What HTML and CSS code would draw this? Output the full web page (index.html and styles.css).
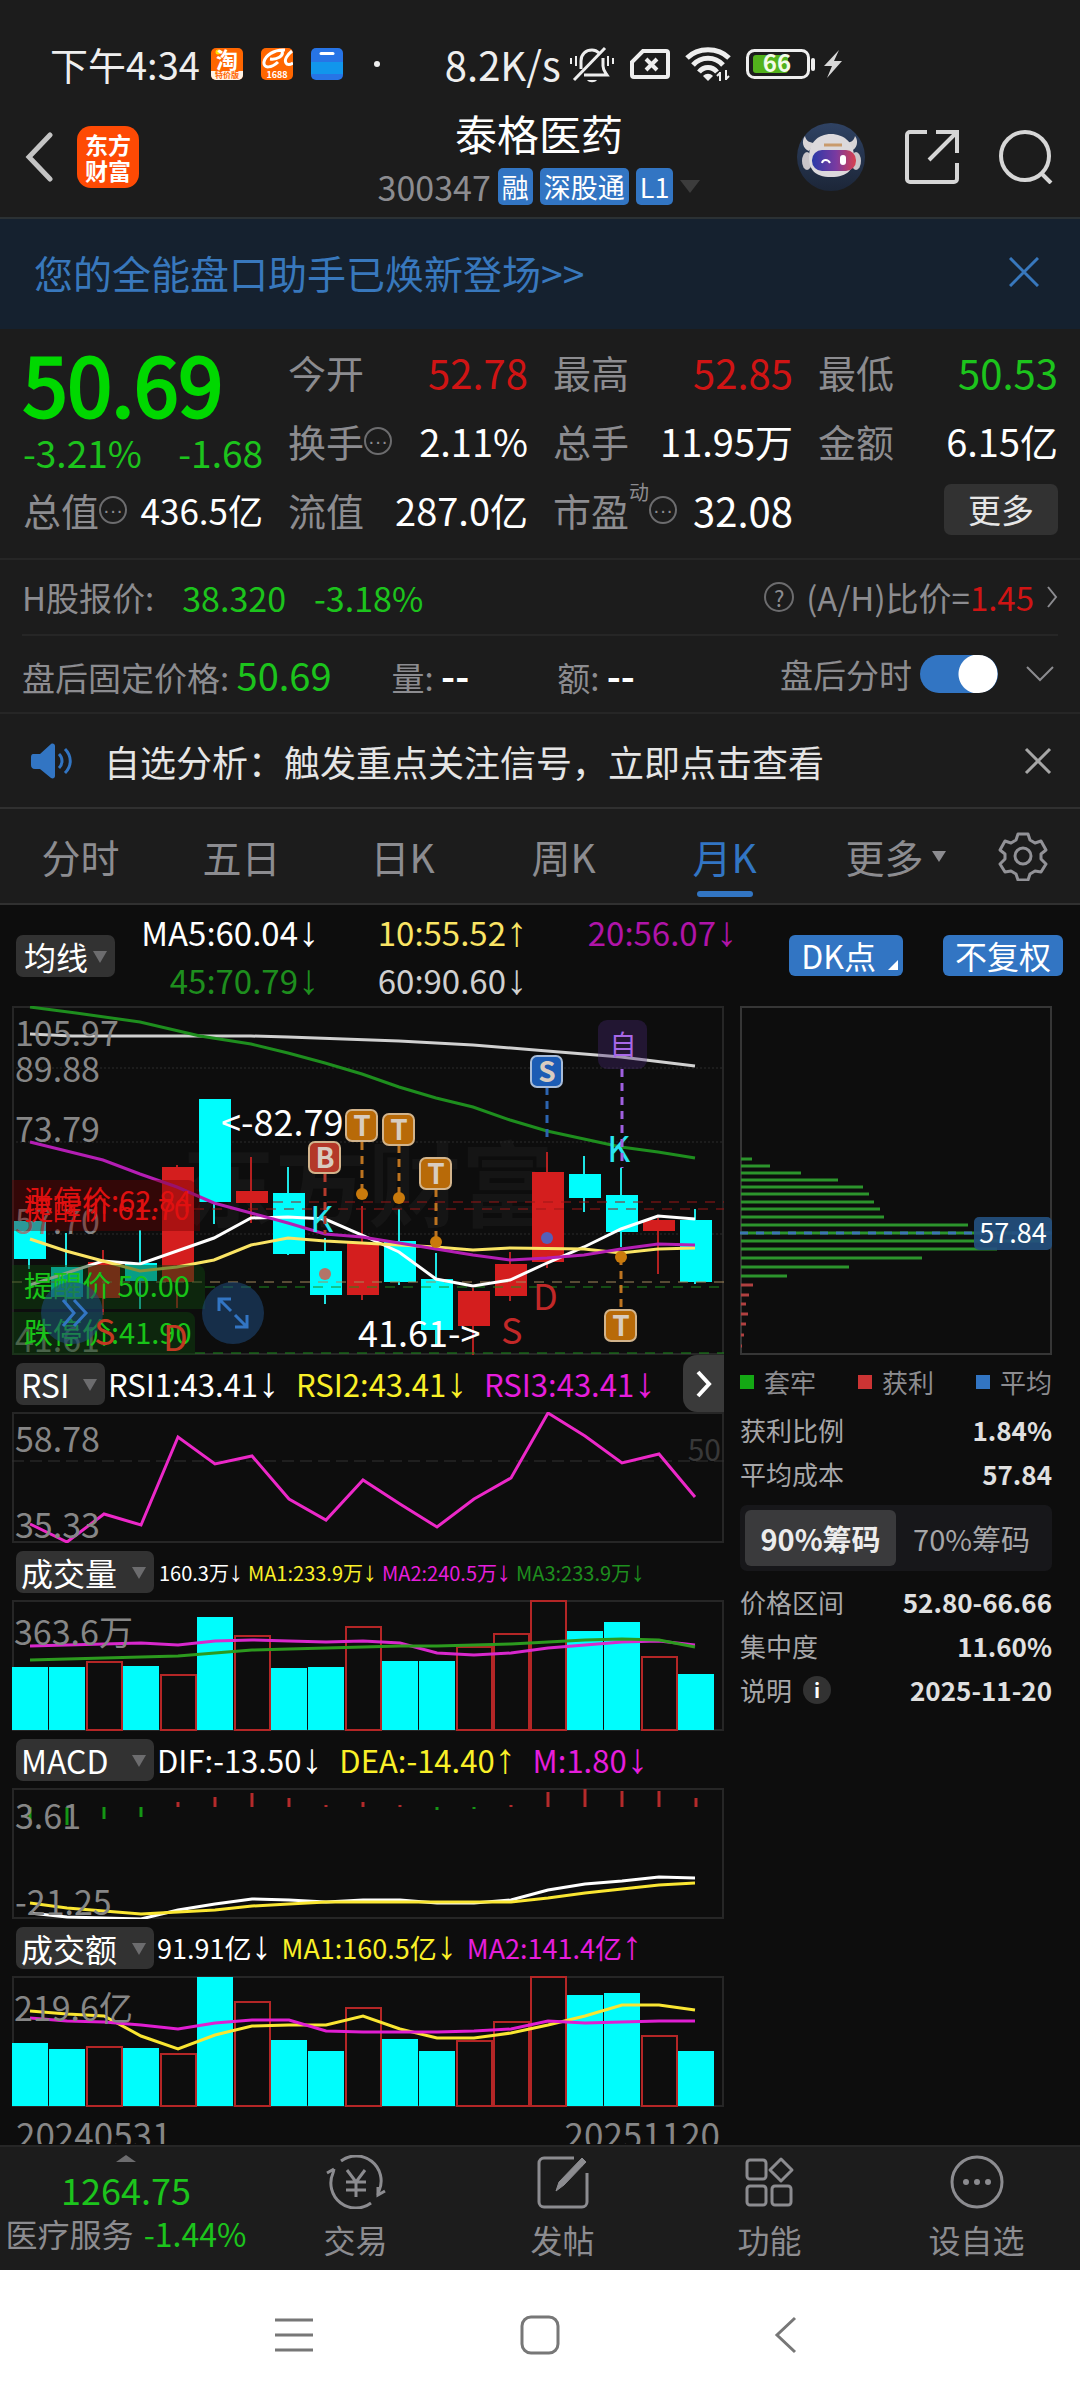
FILE: index.html
```html
<!DOCTYPE html>
<html lang="zh-CN">
<head>
    <meta charset="UTF-8">
    <meta name="viewport" content="width=device-width, initial-scale=1.0">
    <title>泰格医药 300347</title>
    <link rel="stylesheet" href="styles.css">
</head>
<body>
    <!-- Phone status bar -->
    <div class="status">
        <span class="clock">下午4:34</span>
        <div class="notices">
            <svg width="32" height="32" viewBox="0 0 32 32">
                <rect width="32" height="32" rx="5" fill="#f60"/>
                <path d="M0 23h32v4a5 5 0 0 1-5 5H5a5 5 0 0 1-5-5z" fill="#fff3e6"/>
                <circle cx="7" cy="4" r="2.5" fill="#ffe100"/>
                <text x="16" y="20" font-size="22" font-weight="700" fill="#fff" text-anchor="middle">淘</text>
                <text x="16" y="30" font-size="8" font-weight="700" fill="#f60" text-anchor="middle">特价版</text>
            </svg>
            <svg width="32" height="32" viewBox="0 0 32 32">
                <rect width="32" height="32" rx="5" fill="#f60"/>
                <path d="M24 2C13 1 4 8 3 14c-1 7 8 6 14 0M9 11c7 1 14-3 12-8M31 3c-5 4-8 9-6 12 1 2 4 2 7 0" fill="none" stroke="#fff" stroke-width="3"/>
                <text x="16" y="30" font-size="9" font-weight="700" fill="#fff" text-anchor="middle">1688</text>
            </svg>
            <svg width="32" height="32" viewBox="0 0 32 32">
                <rect width="32" height="32" rx="5" fill="#2774e6"/>
                <path d="M0 14h32v12H0z" fill="#1196ec"/>
                <path d="M10 5.500h12" stroke="#fff" stroke-width="3" stroke-linecap="round"/>
            </svg>
            <span class="dot"></span>
        </div>
        <span class="speed">8.2K/s</span>
        <div class="signals">
            <svg width="46" height="40" viewBox="0 0 46 40" fill="none" stroke="#eee" stroke-width="3">
                <path d="M12 25V17c0-7 5-11 11-11 3 0 5 1 7 3M34 14v8c0 4 2 6 4 9H15"/>
                <path d="M5 36 36 4"/>
                <path d="M18 36c2 3 8 3 10 0z" fill="#eee" stroke="none"/>
                <path d="M7 12v10M2 14v6M39 12v10M44 14v6" stroke-width="2"/>
            </svg>
            <svg width="40" height="32" viewBox="0 0 40 32" fill="none" stroke="#eee" stroke-width="4">
                <path d="M13 3h23a2 2 0 0 1 2 2v22a2 2 0 0 1-2 2H4a2 2 0 0 1-2-2V14z"/>
                <path d="m16 11 11 11M27 11 16 22"/>
            </svg>
            <svg width="46" height="36" viewBox="0 0 46 36" fill="none" stroke="#eee" stroke-width="5">
                <path d="M2 12C13 1 33 1 44 12M8 19c8-9 22-9 30 0M14 26c5-6 13-6 18 0"/>
                <path d="m18 30c3-3 7-3 10 0l-5 5z" fill="#eee" stroke="none"/>
                <path d="M35 26v9m0-8-3 3M41 24v10m0-1 3-3" stroke-width="2"/>
            </svg>
            <svg width="70" height="32" viewBox="0 0 70 32">
                <rect x="1.500" y="2.500" width="61" height="27" rx="7" fill="none" stroke="#eee" stroke-width="3"/>
                <rect x="7" y="7" width="35" height="18" rx="3" fill="#52b21c"/>
                <path d="M67 12v9" stroke="#eee" stroke-width="4" stroke-linecap="round"/>
                <text x="31" y="24" font-size="24" font-weight="700" fill="#f2fbe9" text-anchor="middle">66</text>
            </svg>
            <svg class="bolt" width="20" height="30" viewBox="0 0 20 30"><path d="M16 1 1 17h8L4 29 19 12h-8z" fill="#d8d8d8"/></svg>
        </div>
    </div>

    <!-- Title bar -->
    <header class="topbar">
        <div class="top-left">
            <button class="icon-btn" aria-label="返回">
                <svg width="28" height="50" viewBox="0 0 28 50" fill="none" stroke="#c4c4c4" stroke-width="5" stroke-linecap="round"><path d="M25 3 4 25l21 22"/></svg>
            </button>
            <a class="logo" href="#">东方<br>财富</a>
        </div>
        <div class="stock">
            <h1>泰格医药</h1>
            <div class="stock-sub">
                <span class="code">300347</span>
                <span class="tag">融</span>
                <span class="tag">深股通</span>
                <span class="tag">L1</span>
                <button class="icon-btn" aria-label="切换"><svg width="20" height="14" viewBox="0 0 20 14"><path d="M0 0h20L10 13z" fill="#3c3c3c"/></svg></button>
            </div>
        </div>
        <div class="top-right">
            <button class="icon-btn" aria-label="智能助手">
                <svg width="68" height="68" viewBox="0 0 68 68">
                    <defs>
                        <linearGradient id="visor"><stop offset="0" stop-color="#2b3aa8"/><stop offset=".55" stop-color="#7a3aa0"/><stop offset="1" stop-color="#d8404e"/></linearGradient>
                        <linearGradient id="sky" x2="0" y2="1"><stop offset="0" stop-color="#2f4263"/><stop offset="1" stop-color="#1c2638"/></linearGradient>
                    </defs>
                    <circle cx="34" cy="34" r="34" fill="url(#sky)"/>
                    <path d="M8 13c-4 5-2 13 4 15l6-8c-5 0-9-2-10-7zM58 13c4 5 2 13-4 15l-6-8c5 0 9-2 10-7z" fill="#d8d4d6"/>
                    <ellipse cx="10" cy="38" rx="5" ry="9" fill="#c9c5c9"/>
                    <ellipse cx="59" cy="38" rx="5" ry="9" fill="#c9c5c9"/>
                    <path d="M12 34c0-14 9-23 22-23s23 9 23 23c0 12-6 20-23 20S12 46 12 34z" fill="#dcd9dc"/>
                    <rect x="15" y="27" width="44" height="21" rx="10" fill="url(#visor)"/>
                    <path d="M27 22h18" stroke="#c99a6c" stroke-width="3"/>
                    <path d="M25 40c1-4 6-4 8 0" fill="none" stroke="#fff" stroke-width="2"/>
                    <rect x="43" y="32" width="6" height="10" rx="3" fill="#fff"/>
                </svg>
            </button>
            <button class="icon-btn" aria-label="分享">
                <svg width="54" height="54" viewBox="0 0 54 54" fill="none" stroke="#d6d6d6" stroke-width="4"><path d="M22 2H5a3 3 0 0 0-3 3v44a3 3 0 0 0 3 3h44a3 3 0 0 0 3-3V33M31 2h21v21M52 2 24 30"/></svg>
            </button>
            <button class="icon-btn" aria-label="搜索">
                <svg width="54" height="54" viewBox="0 0 54 54" fill="none" stroke="#d6d6d6" stroke-width="4"><circle cx="26" cy="26" r="24"/><path d="m42 43 10 10"/></svg>
            </button>
        </div>
    </header>

    <div class="promo">
        <a href="#">您的全能盘口助手已焕新登场&gt;&gt;</a>
        <button class="icon-btn" aria-label="关闭">
            <svg width="30" height="30" viewBox="0 0 30 30" stroke="#3878bd" stroke-width="3"><path d="m1 1 28 28M29 1 1 29"/></svg>
        </button>
    </div>

    <!-- Quote numbers -->
    <section class="quote">
        <div class="price">
            <div class="last">50.69</div>
            <div class="change"><span>-3.21%</span><span>-1.68</span></div>
        </div>
        <div class="cell"><span>今开</span><b class="red">52.78</b></div>
        <div class="cell"><span>最高</span><b class="red">52.85</b></div>
        <div class="cell"><span>最低</span><b class="green">50.53</b></div>
        <div class="cell cjk"><span>换手<em class="more">···</em></span><b>2.11%</b></div>
        <div class="cell cjk"><span>总手</span><b>11.95万</b></div>
        <div class="cell cjk"><span>金额</span><b>6.15亿</b></div>
        <div class="cell small"><span>总值<em class="more">···</em></span><b>436.5亿</b></div>
        <div class="cell cjk"><span>流值</span><b>287.0亿</b></div>
        <div class="cell"><span>市盈<sup>动</sup><em class="more">···</em></span><b>32.08</b></div>
        <div class="cell end"><button class="more-btn">更多</button></div>
    </section>

    <div class="line-row h-share">
        <span>H股报价:</span>
        <b class="green">38.320</b>
        <b class="green">-3.18%</b>
        <a class="ratio" href="#">
            <em class="help">?</em>
            <span>(A/H)比价=<b class="red">1.45</b></span>
            <svg width="12" height="24" viewBox="0 0 12 24" fill="none" stroke="#8c8c90" stroke-width="2"><path d="m2 2 8 10-8 10"/></svg>
        </a>
    </div>
    <div class="line-row after">
        <span>盘后固定价格: <b class="green">50.69</b></span>
        <span class="vol">量: <b>--</b></span>
        <span class="amt">额: <b>--</b></span>
        <label class="switch">盘后分时<input type="checkbox" role="switch" checked></label>
        <button class="icon-btn" aria-label="展开">
            <svg width="28" height="16" viewBox="0 0 28 16" fill="none" stroke="#8c8c90" stroke-width="2"><path d="m1 1 13 13L27 1"/></svg>
        </button>
    </div>

    <div class="alert">
        <svg width="42" height="36" viewBox="0 0 42 36">
            <path d="M2 11h7L20 1c2-1 4 0 4 2v30c0 2-2 3-4 2L9 26H4c-3 0-4-2-4-4v-8c0-2 1-3 2-3z" fill="#3275c3"/>
            <path d="M28 11c4 4 4 10 0 14M34 6c7 7 7 17 0 24" fill="none" stroke="#3275c3" stroke-width="3"/>
        </svg>
        <a href="#">自选分析：触发重点关注信号，立即点击查看</a>
        <button class="icon-btn" aria-label="关闭">
            <svg width="28" height="28" viewBox="0 0 28 28" stroke="#a6a6a6" stroke-width="3"><path d="m2 2 24 24M26 2 2 26"/></svg>
        </button>
    </div>

    <nav class="tabs">
        <button>分时</button>
        <button>五日</button>
        <button>日K</button>
        <button>周K</button>
        <button class="active">月K</button>
        <button class="others">更多<i class="tri"></i></button>
        <button aria-label="设置">
            <svg width="50" height="50" viewBox="0 0 50 50" fill="none" stroke="#929297" stroke-width="3" stroke-linejoin="round">
                <path d="M20 3h10l2 6 5 3 6-2 5 9-5 4v5l5 5-5 8-6-1-5 3-2 6H20l-2-6-5-3-6 1-5-8 5-5v-5l-5-4 5-9 6 2 5-3z"/>
                <circle cx="25" cy="25" r="8"/>
            </svg>
        </button>
    </nav>

    <main class="charts">
        <div class="ma-bar">
            <span class="pick"><select aria-label="主图指标"><option>均线</option></select></span>
            <div class="ma-values">
                <span>MA5:60.04<i>↓</i></span>
                <span class="yellow">10:55.52<i>↑</i></span>
                <span class="purple">20:56.07<i>↓</i></span>
                <span class="dkgreen">45:70.79<i>↓</i></span>
                <span class="silver">60:90.60<i>↓</i></span>
            </div>
            <button class="blue-btn dk">DK点</button>
            <button class="blue-btn">不复权</button>
        </div>

        <div class="columns">
            <div class="left">
                <!-- Monthly candles -->
                <svg class="plot" viewBox="0 0 712 349">
                    <text class="mark-text" x="170" y="214">东方财富</text>
                    <path class="dots" d="M0 62h712M0 136h712M0 228h712"/>
                    <rect class="frame" x="1" y="1" width="710" height="347"/>
                    <g class="cyan">
                        <path d="M17 215v48M54 227v69M128 224v79M202 93v125M276 161v88M313 232v66M387 203v76M424 247v92M572 150v56M609 162v79M683 203v75"/>
                        <rect x="2" y="215" width="32" height="38"/>
                        <rect x="39" y="261" width="32" height="30"/>
                        <rect x="113" y="257" width="32" height="18"/>
                        <rect x="187" y="93" width="32" height="103"/>
                        <rect x="261" y="187" width="32" height="61"/>
                        <rect x="298" y="245" width="32" height="44"/>
                        <rect x="372" y="235" width="32" height="41"/>
                        <rect x="409" y="273" width="32" height="51"/>
                        <rect x="557" y="168" width="32" height="24"/>
                        <rect x="594" y="189" width="32" height="37"/>
                        <rect x="668" y="214" width="32" height="62"/>
                    </g>
                    <g class="rise">
                        <path d="M91 244v65M165 159v143M239 151v66M350 200v94M461 282v67M498 246v49M535 146v116M646 212v56"/>
                        <rect x="76" y="256" width="32" height="36"/>
                        <rect x="150" y="161" width="32" height="115"/>
                        <rect x="224" y="185" width="32" height="12"/>
                        <rect x="335" y="237" width="32" height="52"/>
                        <rect x="446" y="285" width="32" height="35"/>
                        <rect x="483" y="258" width="32" height="32"/>
                        <rect x="520" y="166" width="32" height="90"/>
                        <rect x="631" y="214" width="32" height="11"/>
                    </g>
                    <g class="levels">
                        <path d="M261 196h451M182 203h530" stroke="#9c1616"/>
                        <path d="M0 276h712" stroke="#a58a5c"/>
                        <path d="M193 281h519M183 347h529" stroke="#1c8c1c"/>
                    </g>
                    <g class="curve">
                        <polyline stroke="#d0d0d0" points="18,28 60,30 128,30 239,30 276,31 387,35 461,39 535,45 609,51 683,60"/>
                        <polyline stroke="#1e8e1e" points="18,1 64,7 128,16 188,30 239,38 276,47 313,57 350,68 387,81 424,92 461,101 498,114 535,125 572,133 609,141 646,146 683,152"/>
                        <polyline stroke="#fff" points="18,279 91,255 128,258 202,232 239,212 276,211 313,213 350,229 387,246 424,273 461,280 498,274 535,257 572,241 609,223 646,210 683,213"/>
                        <polyline stroke="#fae464" points="18,233 54,245 91,255 128,265 165,261 202,254 239,239 276,232 313,235 350,237 387,239 424,241 461,244 498,242 572,243 609,247 646,243 683,242"/>
                        <polyline stroke="#b41eb4" points="18,136 91,154 128,168 165,181 202,197 239,207 276,217 313,228 350,231 387,237 424,243 461,249 498,254 535,252 572,249 609,243 646,238 683,239"/>
                    </g>
                    <g class="axis">
                        <text x="3" y="40">105.97</text>
                        <text x="3" y="76">89.88</text>
                        <text x="3" y="136">73.79</text>
                        <text x="3" y="228">57.70</text>
                        <text x="3" y="346">41.61</text>
                    </g>

                    <!-- Price limits and reminders -->
                    <g class="limit">
                        <path d="M0 174h176a8 8 0 0 1 8 8v36H0zM0 181h180a8 8 0 0 1 8 8v36H0z" fill="#6e0000" fill-opacity=".4"/>
                        <path d="M0 259h185a8 8 0 0 1 8 8v36H0zM0 306h175a8 8 0 0 1 8 8v35H0z" fill="#0d400d" fill-opacity=".5"/>
                        <text x="12" y="206" fill="#e01010">涨停价:62.84</text>
                        <text x="12" y="214" fill="#e01010">提醒价 61.70</text>
                        <text x="12" y="291" fill="#18c418">提醒价 50.00</text>
                        <text x="12" y="338" fill="#18c418">跌停价:41.90</text>
                    </g>
                    <g fill="#1f4a7c" fill-opacity=".55"><circle cx="60" cy="307" r="31"/><circle cx="221" cy="307" r="31"/></g>
                    <g fill="none" stroke="#3275c3" stroke-width="3">
                        <path d="m51 294 11 13-11 13M62 294l12 13-12 13"/>
                        <path d="M219 305l-12-12m0 12v-12h12M223 309l12 12m0-12v12h-12"/>
                    </g>
                    <g class="note">
                        <text x="209" y="130" fill="#fff">&lt;-82.79</text>
                        <text x="346" y="341" fill="#fff">41.61-&gt;</text>
                        <text x="82" y="339" fill="#c23a22">S</text>
                        <text x="151" y="345" fill="#c23a22">D</text>
                        <text x="489" y="338" fill="#c22828">S</text>
                        <text x="521" y="304" fill="#c22828">D</text>
                        <text x="298" y="226" fill="#28e6f0">K</text>
                        <text x="595" y="156" fill="#28e6f0">K</text>
                    </g>

                    <!-- Trade markers -->
                    <g class="stem">
                        <path d="M313 168v60" stroke="#b43a2c"/>
                        <path d="M350 136v52M387 139v53M424 183v53M609 251v52" stroke="#bd7420"/>
                        <path d="M535 81v54" stroke="#2c64b0"/>
                        <path d="M610 63v99" stroke="#a060e0"/>
                    </g>
                    <g fill="#c97a0c">
                        <circle cx="350" cy="188" r="6"/>
                        <circle cx="387" cy="192" r="6"/>
                        <circle cx="424" cy="236" r="6"/>
                        <circle cx="609" cy="251" r="6"/>
                        <circle cx="313" cy="268" r="6" fill="#b47468"/>
                        <circle cx="535" cy="232" r="6" fill="#5560b8"/>
                    </g>
                    <g class="badge" stroke="#d2b48c">
                        <rect x="297" y="136" width="31" height="31" rx="6" fill="#b43828"/>
                        <rect x="334" y="104" width="31" height="31" rx="6" fill="#b86a08"/>
                        <rect x="371" y="108" width="31" height="31" rx="6" fill="#b86a08"/>
                        <rect x="408" y="152" width="31" height="31" rx="6" fill="#b86a08"/>
                        <rect x="593" y="304" width="31" height="31" rx="6" fill="#b86a08"/>
                        <rect x="519" y="50" width="31" height="31" rx="6" fill="#1c5cb4" stroke="#a8bcd8"/>
                    </g>
                    <g class="badge-text">
                        <text x="313" y="162">B</text>
                        <text x="350" y="130">T</text>
                        <text x="387" y="134">T</text>
                        <text x="424" y="178">T</text>
                        <text x="609" y="330">T</text>
                        <text x="535" y="76">S</text>
                    </g>
                    <rect x="586" y="14" width="49" height="49" rx="9" fill="#4a2878" fill-opacity=".35"/>
                    <text x="611" y="49" font-size="27" fill="#a868e8" text-anchor="middle">自</text>
                </svg>

                <div class="sub-head">
                    <span class="pick"><select aria-label="副图一"><option>RSI</option></select></span>
                    <span>RSI1:43.41<i>↓</i></span>
                    <span class="yellow2">RSI2:43.41<i>↓</i></span>
                    <span class="magenta">RSI3:43.41<i>↓</i></span>
                    <button class="next" aria-label="更多指标">
                        <svg width="16" height="28" viewBox="0 0 16 28" fill="none" stroke="#fff" stroke-width="4"><path d="m2 2 11 12L2 26"/></svg>
                    </button>
                </div>
                <svg class="plot" viewBox="0 0 712 131">
                    <rect class="frame" x="1" y="1" width="710" height="129"/>
                    <path d="M0 49h712" stroke="#333" stroke-width="1" stroke-dasharray="12 6"/>
                    <polyline class="curve" stroke="#ec28c8" points="18,112 55,130 92,102 129,113 166,25 203,52 240,44 277,87 314,108 351,68 388,92 425,115 462,87 499,66 536,1 573,24 610,51 647,42 683,85"/>
                    <g class="axis">
                        <text x="3" y="40">58.78</text>
                        <text x="3" y="126">35.33</text>
                    </g>
                    <text x="709" y="49" font-size="30" fill="#383838" text-anchor="end">50</text>
                </svg>

                <div class="sub-head narrow">
                    <span class="pick wide"><select aria-label="副图二"><option>成交量</option></select></span>
                    <span>160.3万<i>↓</i></span>
                    <span class="yellow2">MA1:233.9万<i>↓</i></span>
                    <span class="magenta">MA2:240.5万<i>↓</i></span>
                    <span class="dkgreen">MA3:233.9万<i>↓</i></span>
                </div>
                <svg class="plot" viewBox="0 0 712 131">
                    <rect class="frame" x="1" y="1" width="710" height="129"/>
                    <path fill="#00fdfd" d="M0 67h36v63H0zM37 67h36v63H37zM111 66h36v64h-36zM185 17h36v113h-36zM259 68h36v62h-36zM296 67h36v63h-36zM370 61h36v69h-36zM407 61h36v69h-36zM555 31h36v99h-36zM592 22h36v108h-36zM666 74h36v56h-36z"/>
                    <path class="hollow" d="M75 62h35v68H75zM149 75h35v55h-35zM223 36h35v94h-35zM334 27h35v103h-35zM445 47h35v83h-35zM482 34h35v96h-35zM519 1h35v129h-35zM630 57h35v73h-35z"/>
                    <g class="curve">
                        <polyline stroke="#d828cc" points="18,46 55,45 92,44 129,43 166,45 203,41 240,40 277,41 314,42 351,41 388,43 425,53 462,55 499,53 536,48 573,45 610,42 647,41 683,45"/>
                        <polyline stroke="#2c9a1e" points="18,60 55,59 92,58 129,57 166,56 203,53 240,50 277,49 314,48 351,47 388,46 425,46 462,45 499,44 536,42 573,40 610,39 647,40 683,47"/>
                    </g>
                    <g class="axis"><text x="2" y="45">363.6万</text></g>
                </svg>

                <div class="sub-head">
                    <span class="pick wide"><select aria-label="副图三"><option>MACD</option></select></span>
                    <span>DIF:-13.50<i>↓</i></span>
                    <span class="yellow2">DEA:-14.40<i>↑</i></span>
                    <span class="magenta">M:1.80<i>↓</i></span>
                </div>
                <svg class="plot" viewBox="0 0 712 131">
                    <rect class="frame" x="1" y="1" width="710" height="129"/>
                    <path d="M18 19v13M55 19v18M92 19v12M129 19v10M425 19v3M462 19v2" stroke="#149614" stroke-width="3"/>
                    <path d="M166 19v-5M203 19V9M240 19V5M277 19v-9M314 19v-2M351 19v-5M388 19v-2M499 19v-2M536 19V4M573 19V1M610 19V3M647 19V3M684 19v-9" stroke="#b42a2a" stroke-width="3"/>
                    <g class="curve">
                        <polyline stroke="#fff" points="18,125 55,129 92,130 129,131 166,122 203,116 240,111 277,112 314,114 351,112 388,112 425,115 462,115 499,112 536,102 573,96 610,93 647,89 683,90"/>
                        <polyline stroke="#fae632" points="18,115 55,120 92,123 129,126 166,124 203,122 240,118 277,116 314,114 351,114 499,114 536,110 573,105 610,101 647,97 683,95"/>
                    </g>
                    <g class="axis">
                        <text x="3" y="41">3.61</text>
                        <text x="3" y="127">-21.25</text>
                    </g>
                </svg>

                <div class="sub-head medium">
                    <span class="pick wide"><select aria-label="副图四"><option>成交额</option></select></span>
                    <span>91.91亿<i>↓</i></span>
                    <span class="yellow2">MA1:160.5亿<i>↓</i></span>
                    <span class="magenta">MA2:141.4亿<i>↑</i></span>
                </div>
                <svg class="plot" viewBox="0 0 712 131">
                    <rect class="frame" x="1" y="1" width="710" height="129"/>
                    <path fill="#00fdfd" d="M0 67h36v63H0zM37 73h36v57H37zM111 72h36v58h-36zM185 1h36v129h-36zM259 64h36v66h-36zM296 75h36v55h-36zM370 63h36v67h-36zM407 75h36v55h-36zM555 19h36v111h-36zM592 17h36v113h-36zM666 75h36v55h-36z"/>
                    <path class="hollow" d="M75 71h35v59H75zM149 78h35v52h-35zM223 26h35v104h-35zM334 32h35v98h-35zM445 65h35v65h-35zM482 46h35v84h-35zM519 1h35v129h-35zM630 60h35v70h-35z"/>
                    <g class="curve">
                        <polyline stroke="#fae632" points="18,35 55,38 92,40 129,60 166,73 203,59 240,50 277,49 314,49 351,40 388,53 425,62 462,62 499,57 536,49 573,40 610,29 647,29 683,34"/>
                        <polyline stroke="#e01ed2" points="18,42 55,45 92,46 129,49 166,53 203,47 240,44 277,44 314,55 351,56 388,56 425,56 462,55 499,53 536,45 573,47 610,46 647,45 683,45"/>
                    </g>
                    <g class="axis"><text x="2" y="45">219.6亿</text></g>
                </svg>
                <div class="dates"><span>20240531</span><span>20251120</span></div>
            </div>

            <!-- Cost distribution -->
            <aside class="right">
                <svg class="plot" viewBox="0 0 312 349">
                    <rect x="1" y="1" width="310" height="347" fill="none" stroke="#363636" stroke-width="2"/>
                    <path stroke="#2c942c" stroke-width="3" d="M1 153h11M1 160h29M1 167h60M1 174h97M1 181h122M1 188h128M1 196h133M1 203h139M1 211h143M1 219h227M1 227h310M1 235h299M1 243h256M1 252h181M1 261h108M1 270h46"/>
                    <path stroke="#b04040" stroke-width="3" d="M1 279h12M1 289h8M1 298h5M1 308h7M1 318h5M1 329h3M1 340h1"/>
                    <path stroke="#3c74b4" stroke-width="3" stroke-dasharray="8 8" d="M0 227h312"/>
                    <rect x="234" y="211" width="78" height="33" rx="5" fill="#24507e" fill-opacity=".93"/>
                    <text x="273" y="237" font-size="27" fill="#fff" text-anchor="middle">57.84</text>
                </svg>
                <div class="legend">
                    <span><i class="trapped"></i>套牢</span>
                    <span><i class="profit"></i>获利</span>
                    <span><i class="average"></i>平均</span>
                </div>
                <dl class="facts">
                    <dt>获利比例</dt><dd>1.84%</dd>
                    <dt>平均成本</dt><dd>57.84</dd>
                </dl>
                <div class="segment">
                    <button class="on">90%筹码</button>
                    <button>70%筹码</button>
                </div>
                <dl class="facts">
                    <dt>价格区间</dt><dd>52.80-66.66</dd>
                    <dt>集中度</dt><dd>11.60%</dd>
                    <dt>说明<em class="info">i</em></dt><dd>2025-11-20</dd>
                </dl>
            </aside>
        </div>
    </main>

    <footer class="toolbar">
        <a class="index" href="#">
            <i class="tri-up"></i>
            <b>1264.75</b>
            <span>医疗服务<em>-1.44%</em></span>
        </a>
        <button>
            <svg width="62" height="54" viewBox="0 0 62 54" fill="none" stroke="#8c8c90" stroke-width="3">
                <path d="M16 6A25 25 0 0 1 54 36l-1 4M46 48A25 25 0 0 1 8 18l1-4"/>
                <path d="M2 18l7-4M60 36l-7 4v-8"/>
                <path d="m22 15 9 12 9-12M31 27v15M21 27h20M21 35h20"/>
            </svg>
            交易
        </button>
        <button>
            <svg width="62" height="54" viewBox="0 0 62 54" fill="none" stroke="#8c8c90" stroke-width="3">
                <path d="M42 3H12a5 5 0 0 0-5 5v39a5 5 0 0 0 5 5h38a5 5 0 0 0 5-5V18"/>
                <path d="m24 36 3-9L50 3l4 4-22 23zM46 7l5 4" fill="#8c8c90" stroke-width="1"/>
            </svg>
            发帖
        </button>
        <button>
            <svg width="62" height="54" viewBox="0 0 62 54" fill="none" stroke="#8c8c90" stroke-width="3">
                <rect x="8" y="5" width="19" height="19" rx="3"/>
                <rect x="8" y="31" width="19" height="19" rx="3"/>
                <rect x="33" y="31" width="19" height="19" rx="3"/>
                <path d="M42 4 53 15 42 26 31 15z" stroke-linejoin="round"/>
            </svg>
            功能
        </button>
        <button>
            <svg width="62" height="54" viewBox="0 0 62 54" fill="none" stroke="#8c8c90" stroke-width="3">
                <circle cx="31" cy="27" r="25"/>
                <g fill="#8c8c90" stroke="none"><circle cx="20" cy="27" r="3"/><circle cx="31" cy="27" r="3"/><circle cx="42" cy="27" r="3"/></g>
            </svg>
            设自选
        </button>
    </footer>

    <!-- System navigation keys -->
    <div class="sysnav">
        <button aria-label="菜单"><svg width="40" height="40" viewBox="0 0 40 40" stroke="#777" stroke-width="3"><path d="M1 5h38M1 20h38M1 35h38"/></svg></button>
        <button aria-label="主页"><svg width="40" height="40" viewBox="0 0 40 40" fill="none" stroke="#777" stroke-width="3"><rect x="2" y="2" width="36" height="36" rx="9"/></svg></button>
        <button aria-label="返回"><svg width="40" height="40" viewBox="0 0 40 40" fill="none" stroke="#777" stroke-width="3"><path d="M29 3 11 20l18 17"/></svg></button>
    </div>
</body>
</html>
```
FILE: styles.css
```css
* {
    margin: 0;
    padding: 0;
    box-sizing: border-box;
}

body {
    font-family: "Noto Sans CJK SC", "Noto Sans", sans-serif;
    background: #1c1c1c;
    color: #fff;
    min-height: 100vh;
    display: flex;
    flex-direction: column;
}

button, select {
    font: inherit;
    color: inherit;
    background: none;
    border: none;
    appearance: none;
}

a {
    color: inherit;
    text-decoration: none;
}

svg {
    display: block;
    flex-shrink: 0;
}

b, em, i {
    font-style: normal;
    font-weight: 400;
}

.icon-btn {
    display: flex;
}

.red { color: #d01414; }
.green { color: #1cc41c; }
.yellow { color: #fae464; }
.yellow2 { color: #faf028; }
.purple { color: #b014a8; }
.magenta { color: #e61edc; }
.dkgreen { color: #1e8e1e; }
.silver { color: #d0d0d0; }

/* Status bar */
.status {
    display: flex;
    align-items: center;
    height: 108px;
    padding: 20px 50px 0;
    font-size: 38px;
    line-height: 40px;
    color: #eee;
}

.notices {
    display: flex;
    align-items: center;
    gap: 18px;
    margin-left: 11px;
}

.dot {
    width: 6px;
    height: 6px;
    border-radius: 50%;
    background: #eee;
    margin-left: 13px;
}

.speed {
    margin-left: 65px;
    font-size: 40px;
}

.signals {
    display: flex;
    align-items: center;
    gap: 15px;
    margin-left: 8px;
}

.bolt {
    margin-left: -8px;
}

/* Title bar */
.topbar {
    display: grid;
    grid-template-columns: 1fr auto 1fr;
    align-items: center;
    height: 111px;
    padding: 0 27px 11px 25px;
    border-bottom: 2px solid #2b3134;
}

.top-left, .top-right {
    display: flex;
    align-items: center;
    gap: 24px;
}

.top-right {
    justify-content: flex-end;
    gap: 40px;
}

.logo {
    width: 62px;
    height: 62px;
    padding-top: 5px;
    border-radius: 14px;
    background: #fe4a04;
    font-size: 23px;
    font-weight: 700;
    line-height: 26px;
    text-align: center;
}

.stock {
    align-self: start;
    text-align: center;
}

.stock h1 {
    font-size: 42px;
    font-weight: 400;
    line-height: 50px;
    margin-bottom: 10px;
}

.stock-sub {
    display: flex;
    align-items: center;
    justify-content: center;
    gap: 7px;
    line-height: 37px;
}

.code {
    font-size: 34px;
    color: #8c8c90;
}

.tag {
    padding: 0 4px;
    border-radius: 5px;
    background: #3275c3;
    font-size: 27px;
}

.promo {
    display: flex;
    align-items: center;
    justify-content: space-between;
    height: 110px;
    padding: 0 41px 4px 34px;
    background: #15212f;
    color: #3878bd;
    font-size: 39px;
}

/* Quote */
.quote {
    display: grid;
    grid-template-columns: repeat(4, 1fr);
    grid-template-rows: repeat(3, 69px);
    column-gap: 25px;
    padding: 8px 22px 14px 23px;
    height: 231px;
    border-bottom: 2px solid #262626;
}

.price {
    grid-row: span 2;
    color: #00d800;
}

.last {
    font-size: 80px;
    line-height: 90px;
    -webkit-text-stroke: 3px #00d800;
}

.change {
    display: flex;
    justify-content: space-between;
    font-size: 37px;
    line-height: 50px;
    color: #1cc41c;
}

.cell {
    display: flex;
    justify-content: space-between;
    align-items: center;
    white-space: nowrap;
    font-size: 38px;
}

.cell > span {
    display: flex;
    align-items: center;
    color: #8c8c90;
}

.cell b {
    font-size: 40px;
}

.cell.cjk b {
    font-size: 38px;
}

.cell.small b {
    font-size: 35px;
}

.cell.end {
    justify-content: flex-end;
}

.cell sup {
    align-self: flex-start;
    font-size: 20px;
    line-height: 20px;
}

.more, .help {
    width: 28px;
    height: 28px;
    border: 2px solid #6c6c6e;
    border-radius: 50%;
    font-size: 22px;
    line-height: 24px;
    text-align: center;
    color: #8c8c90;
}

.more {
    font-family: "Liberation Sans", sans-serif;
    font-size: 20px;
}

.more-btn {
    padding: 0 24px;
    border-radius: 7px;
    background: #323232;
    color: #e6e6e6;
    font-size: 33px;
    line-height: 51px;
}

.line-row {
    display: flex;
    align-items: center;
    height: 76px;
    margin: 0 22px;
    color: #8c8c90;
    font-size: 33px;
    white-space: nowrap;
}

.h-share {
    border-bottom: 2px solid #262626;
}

.h-share > b {
    font-size: 34px;
    margin-left: 28px;
}

.ratio {
    display: flex;
    align-items: center;
    gap: 12px;
    margin-left: auto;
}

.help {
    width: 30px;
    height: 30px;
    line-height: 26px;
}

.after > span b {
    font-size: 38px;
}

.after .vol b, .after .amt b {
    color: #fff;
    font-weight: 700;
}

.vol {
    margin-left: 60px;
}

.amt {
    margin-left: 88px;
}

.switch {
    display: flex;
    align-items: center;
    gap: 8px;
    margin-left: auto;
}

.switch input {
    appearance: none;
    width: 78px;
    height: 38px;
    border-radius: 19px;
    background: radial-gradient(circle at 58px 19px, #fff 19px, transparent 20px), #3275c3;
}

.after .icon-btn {
    margin: 0 4px 0 28px;
}

.alert {
    display: flex;
    align-items: center;
    height: 97px;
    padding: 0 28px 0 31px;
    border-top: 2px solid #262626;
    border-bottom: 2px solid #303030;
    color: #e5e5e5;
    font-size: 36px;
}

.alert a {
    flex: 1;
    margin-left: 31px;
}

/* Period tabs */
.tabs {
    display: grid;
    grid-template-columns: repeat(6, 161fr) 114fr;
    height: 96px;
    border-bottom: 2px solid #303030;
    color: #8c8c90;
    font-size: 39px;
}

.tabs button {
    position: relative;
    display: flex;
    align-items: center;
    justify-content: center;
}

.tabs .active {
    color: #3275c3;
}

.tabs .active::after {
    content: "";
    position: absolute;
    bottom: 6px;
    left: calc(50% - 28px);
    width: 56px;
    height: 6px;
    border-radius: 3px;
    background: #3275c3;
}

.tabs .others {
    padding-left: 20px;
}

.tri {
    margin-left: 8px;
    border: 7px solid transparent;
    border-top: 11px solid #8c8c90;
    border-bottom: none;
}

/* Charts */
.charts {
    flex: 1;
    background: #0d0d0d;
}

.ma-bar {
    display: flex;
    align-items: center;
    height: 101px;
    padding: 0 17px 0 16px;
}

.pick {
    position: relative;
    flex-shrink: 0;
}

.pick select {
    display: block;
    width: 99px;
    height: 42px;
    padding-left: 8px;
    border-radius: 7px;
    background: #323232;
    font-size: 32px;
    line-height: 42px;
    color: #fff;
}

.sub-head .pick select {
    width: 89px;
    padding-left: 5px;
}

.sub-head .wide select {
    width: 138px;
}

.pick::after {
    content: "";
    position: absolute;
    right: 8px;
    top: 16px;
    border: 7px solid transparent;
    border-top: 12px solid #6c6c6e;
    border-bottom: none;
}

.ma-values {
    display: grid;
    grid-template-columns: 204px 208px 210px;
    justify-items: end;
    margin-right: auto;
    font-size: 33px;
    line-height: 48px;
    white-space: nowrap;
}

.ma-values i, .sub-head i {
    font-family: "Liberation Sans", sans-serif;
    font-size: 42px;
    line-height: 30px;
}

.blue-btn {
    position: relative;
    padding: 0 12px;
    border-radius: 6px;
    background: #3275c3;
    font-size: 32px;
    line-height: 41px;
}

.dk {
    padding-right: 27px;
    margin-right: 40px;
}

.dk::after {
    content: "";
    position: absolute;
    right: 5px;
    bottom: 6px;
    border-left: 10px solid transparent;
    border-bottom: 10px solid #fff;
}

.columns {
    display: grid;
    grid-template-columns: 712fr 312fr;
    column-gap: 16px;
    padding: 0 28px 0 12px;
}

.plot {
    width: 100%;
    height: auto;
}

.frame {
    fill: none;
    stroke: #262626;
    stroke-width: 2;
}

.dots {
    stroke: #2c2c2c;
    stroke-width: 1;
    stroke-dasharray: 2 2;
}

.mark-text {
    font-size: 93px;
    font-weight: 700;
    fill: #151515;
}

.cyan {
    fill: #00fdfd;
    stroke: none;
}

.rise {
    fill: #d41e1e;
    stroke: none;
}

.cyan path {
    stroke: #1ee6e6;
    stroke-width: 2;
}

.rise path {
    stroke: #b42020;
    stroke-width: 2;
}

.hollow {
    fill: #0d0d0d;
    stroke: #b42626;
    stroke-width: 2;
}

.levels {
    stroke-width: 1;
    stroke-dasharray: 10 8;
}

.curve {
    fill: none;
    stroke-width: 3;
}

.axis {
    font-size: 34px;
    fill: #868686;
}

.limit {
    font-size: 29px;
}

.note {
    font-size: 36px;
}

.stem {
    stroke-width: 3;
    stroke-dasharray: 8 6;
}

.badge {
    stroke-width: 2;
}

.badge-text {
    font-size: 28px;
    font-weight: 700;
    fill: #d8ccc0;
    text-anchor: middle;
}

.sub-head {
    display: flex;
    align-items: center;
    gap: 17px;
    height: 57px;
    padding-left: 4px;
    font-size: 31px;
    white-space: nowrap;
}

.sub-head .pick {
    margin-right: -14px;
}

.sub-head.medium {
    gap: 10px;
    font-size: 27px;
}

.medium .pick {
    margin-right: -7px;
}

.medium i {
    font-size: 40px;
}

.sub-head.narrow {
    gap: 5px;
    font-size: 20px;
}

.narrow i {
    font-size: 28px;
}

.narrow .pick {
    margin-right: 0;
}

.next {
    display: flex;
    align-items: center;
    justify-content: center;
    align-self: stretch;
    width: 41px;
    margin-left: auto;
    border-radius: 14px 0 0 14px;
    background: #3a3a3a;
}

.dates {
    display: flex;
    justify-content: space-between;
    height: 37px;
    padding: 4px 4px 0;
    overflow: hidden;
    font-size: 35px;
    line-height: 46px;
    color: #868686;
}

.legend {
    display: flex;
    justify-content: space-between;
    height: 53px;
    align-items: center;
    font-size: 26px;
    color: #8c8c90;
}

.legend span {
    display: flex;
    align-items: center;
    gap: 10px;
}

.legend i {
    width: 14px;
    height: 14px;
}

.trapped { background: #14a814; }
.profit { background: #cc3434; }
.average { background: #3275c3; }

.facts {
    display: grid;
    grid-template-columns: auto auto;
    justify-content: space-between;
    font-size: 26px;
    line-height: 44px;
    color: #a6a6a8;
}

.facts dt {
    display: flex;
    align-items: center;
}

.facts dd {
    font-weight: 700;
    text-align: right;
    color: #e0e0e0;
}

.info {
    width: 28px;
    height: 28px;
    margin-left: 11px;
    border-radius: 50%;
    background: #323232;
    color: #fff;
    font-size: 20px;
    font-weight: 700;
    line-height: 28px;
    text-align: center;
}

.segment {
    display: grid;
    grid-template-columns: 1fr 1fr;
    margin: 9px 0;
    padding: 5px;
    border-radius: 7px;
    background: #17171a;
    font-size: 29px;
    line-height: 56px;
    color: #a6a6a8;
}

.segment .on {
    border-radius: 6px;
    background: #3a3a3c;
    color: #ececec;
    font-weight: 700;
}

/* Bottom bars */
.toolbar {
    display: grid;
    grid-template-columns: 252fr 207fr 207fr 207fr 207fr;
    height: 125px;
    border-top: 2px solid #262626;
    color: #8c8c90;
    font-size: 32px;
}

.toolbar > button {
    display: flex;
    flex-direction: column;
    align-items: center;
    gap: 5px;
    padding-top: 8px;
    line-height: 50px;
}

.index {
    display: flex;
    flex-direction: column;
    align-items: center;
    padding-top: 8px;
    line-height: 44px;
    white-space: nowrap;
}

.index b {
    padding-top: 5px;
    font-size: 36px;
    color: #1cc41c;
}

.index em {
    margin-left: 10px;
    color: #1cc41c;
}

.tri-up {
    border: 10px solid transparent;
    border-bottom: 7px solid #6c6c6e;
    border-top: none;
}

.sysnav {
    display: flex;
    justify-content: center;
    gap: 206px;
    height: 130px;
    background: #fff;
}

.sysnav button {
    display: flex;
    align-items: center;
}
```
